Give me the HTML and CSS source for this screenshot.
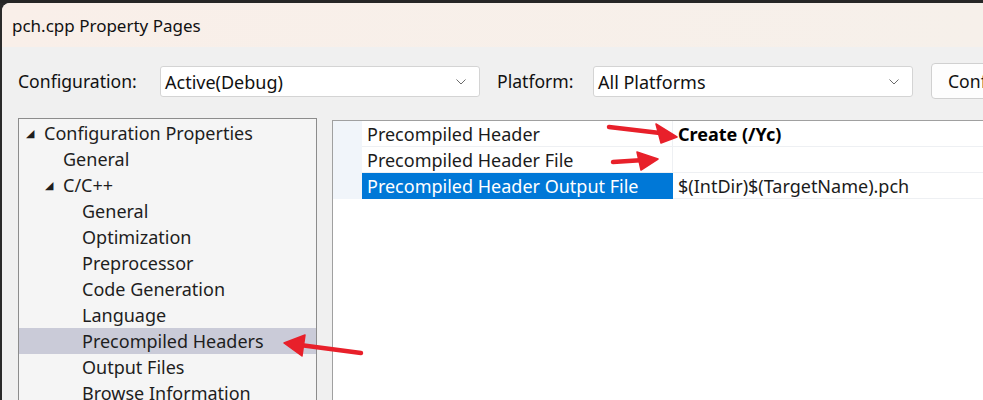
FILE: index.html
```html
<!DOCTYPE html>
<html lang="en">
  <head>
    <meta charset="UTF-8" />
    <title>pch.cpp Property Pages</title>
    <link rel="stylesheet" href="styles.css">
  </head>
  <body>
    <div class="host-strip"></div>

    <div class="dialog">
      <div class="titlebar">pch.cpp Property Pages</div>

      <!-- configuration / platform pickers -->
      <div class="toolbar">
        <span class="label cfg-label">Configuration:</span>
        <div class="combo">
          <span>Active(Debug)</span>
          <svg class="chevron" width="10" height="6" viewBox="0 0 10 6"><path d="M0.5 0.5 L5 5 L9.5 0.5" fill="none" stroke="#6b6b6b" stroke-width="1"/></svg>
        </div>
        <span class="label plat-label">Platform:</span>
        <div class="combo">
          <span>All Platforms</span>
          <svg class="chevron" width="10" height="6" viewBox="0 0 10 6"><path d="M0.5 0.5 L5 5 L9.5 0.5" fill="none" stroke="#6b6b6b" stroke-width="1"/></svg>
        </div>
        <button class="btn">Configuration Manager...</button>
      </div>

      <div class="main">
        <!-- settings tree -->
        <ul class="tree">
          <li class="lvl0"><span class="twist">◢</span>Configuration Properties</li>
          <li class="lvl1">General</li>
          <li class="lvl1 open"><span class="twist">◢</span>C/C++</li>
          <li class="lvl2">General</li>
          <li class="lvl2">Optimization</li>
          <li class="lvl2">Preprocessor</li>
          <li class="lvl2">Code Generation</li>
          <li class="lvl2">Language</li>
          <li class="lvl2 selected">Precompiled Headers</li>
          <li class="lvl2">Output Files</li>
          <li class="lvl2">Browse Information</li>
        </ul>

        <!-- property grid -->
        <div class="grid">
          <div class="rows">
            <div class="row">
              <div class="gutter"></div>
              <div class="name">Precompiled Header</div>
              <div class="value bold">Create (/Yc)</div>
            </div>
            <div class="row">
              <div class="gutter"></div>
              <div class="name">Precompiled Header File</div>
              <div class="value"></div>
            </div>
            <div class="row active">
              <div class="gutter"></div>
              <div class="name">Precompiled Header Output File</div>
              <div class="value">$(IntDir)$(TargetName).pch</div>
            </div>
          </div>
        </div>
      </div>
    </div>

    <!-- red markup arrows -->
    <svg class="markup" width="983" height="400" viewBox="0 0 983 400">
      <g fill="#e8202a" stroke="#e8202a" stroke-linecap="round" stroke-linejoin="round">
        <path d="M609 127 L660 133" stroke-width="4.5" fill="none"/>
        <polygon points="656,124 677,137 661,143" stroke-width="1.5"/>
        <path d="M613 162 L644 160" stroke-width="4.5" fill="none"/>
        <polygon points="637,152 658,159 641,170" stroke-width="1.5"/>
        <path d="M361 353 L300 345" stroke-width="4.5" fill="none"/>
        <polygon points="305,335 284,343 302,356" stroke-width="1.5"/>
      </g>
    </svg>
  </body>
</html>
```

FILE: styles.css
```css
html,
body {
  margin: 0;
  padding: 0;
  width: 100%;
  height: 100%;
  overflow: hidden;
}

body {
  background: #2a2a2a;
  font-family: "Noto Sans", "Open Sans", sans-serif;
  font-size: 18px;
  color: #1b1b1b;
  position: relative;
}

.host-strip {
  height: 3px;
  background: #262626;
}

.dialog {
  margin-left: 2px;
  height: 397px;
  background: #f0f0f0;
  border-top-left-radius: 8px;
  overflow: hidden;
}

.titlebar {
  height: 44px;
  display: flex;
  align-items: center;
  padding-left: 10px;
  background: linear-gradient(to right, #f9efe9, #f6f0ea);
  font-size: 17px;
  color: #111;
}

.toolbar {
  display: flex;
  align-items: center;
  height: 36px;
  margin-top: 16px;
  padding-left: 16px;
  white-space: nowrap;
}

.toolbar > * {
  flex: none;
}

.label {
  color: #111;
  font-size: 17.6px;
}

.cfg-label {
  width: 142px;
}

.plat-label {
  margin-left: 17px;
  width: 96px;
}

.combo {
  box-sizing: border-box;
  width: 320px;
  height: 31px;
  margin-top: 1px;
  display: flex;
  align-items: center;
  justify-content: space-between;
  padding: 0 13px 0 4px;
  background: #fff;
  border: 1px solid #d4d4d4;
  border-radius: 3px;
  color: #111;
}

.btn {
  margin-left: 18px;
  height: 36px;
  padding: 0 16px;
  background: #fdfdfd;
  border: 1px solid #d0d0d0;
  border-radius: 4px;
  font: inherit;
  font-size: 17.6px;
  color: #111;
  white-space: nowrap;
}

.main {
  display: flex;
  align-items: flex-start;
  gap: 15px;
  margin-top: 19px;
  padding-left: 16px;
}

/* tree */
.tree {
  list-style: none;
  margin: 0;
  padding: 1px 0 0;
  width: 297px;
  height: 300px;
  flex: none;
  background: #f5f5f5;
  border: 1px solid #8c8c8c;
}

.tree li {
  height: 26px;
  line-height: 26px;
  white-space: nowrap;
  color: #1e1e1e;
  position: relative;
}

.lvl0 { padding-left: 25px; }
.lvl1 { padding-left: 44px; }
.lvl2 { padding-left: 63px; }

.twist {
  position: absolute;
  font-size: 11px;
  color: #1e1e1e;
  margin-left: -18px;
  top: 0;
}

.tree .selected {
  background: #cacbd8;
}

/* property grid */
.grid {
  flex: 1;
  height: 300px;
  margin-top: 2px;
  background: #fff;
  border: 1px solid #a0a0a0;
  border-right: none;
}

.row {
  display: flex;
  height: 26px;
  line-height: 27px;
  white-space: nowrap;
}

.gutter {
  width: 29px;
  flex: none;
  background: #f1f5fa;
}

.name {
  box-sizing: border-box;
  width: 311px;
  flex: none;
  padding-left: 5px;
  border-bottom: 1px solid #eef0f3;
  border-right: 1px solid #eef0f3;
}

.value {
  flex: 1;
  padding-left: 5px;
  border-bottom: 1px solid #eef0f3;
}

.bold {
  font-weight: bold;
  color: #000;
}

.active .name {
  background: #0078d7;
  color: #fff;
  border-color: #0078d7;
}

.markup {
  position: absolute;
  left: 0;
  top: 0;
  pointer-events: none;
}
```
